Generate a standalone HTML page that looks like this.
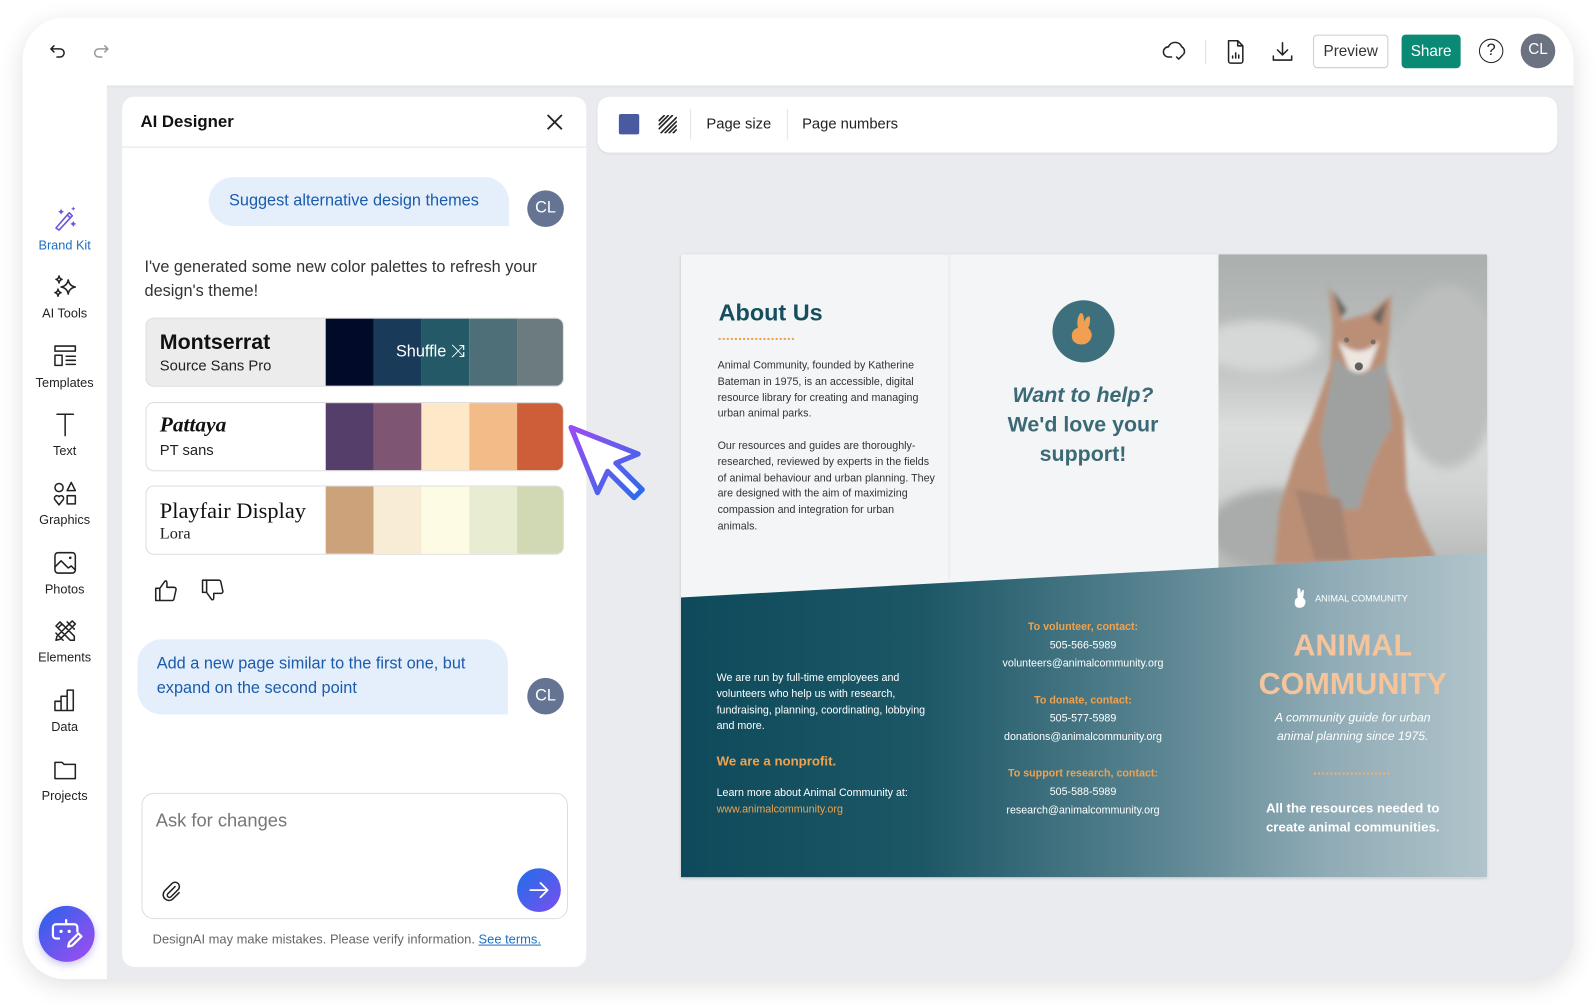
<!DOCTYPE html>
<html><head><meta charset="utf-8"><style>
*{margin:0;padding:0;box-sizing:border-box}
body{width:1596px;height:1008px;overflow:hidden;background:#fff;font-family:"Liberation Sans",sans-serif;color:#222}
#w{position:absolute;left:0;top:0;width:1568px;height:990px;transform:scale(1.01786);transform-origin:0 0}
.a{position:absolute}
.frame{left:22px;top:17px;width:1524px;height:945px;border-radius:42px;background:#e9ebee;overflow:hidden;box-shadow:0 6px 24px rgba(0,0,0,.12)}
.top{left:0;top:0;width:1524px;height:67px;background:#fff;box-shadow:0 1px 3px rgba(0,0,0,.08)}
.side{left:0;top:67px;width:83px;height:878px;background:#fff}
.si{position:absolute;left:0;width:83px;text-align:center;font-size:12.5px;color:#222}
.si svg{display:block;margin:0 auto 6px}
.ico{fill:none;stroke:#222;stroke-width:1.5;stroke-linecap:round;stroke-linejoin:round}
.panel{left:120px;top:95px;width:456px;height:855px;background:#fff;border-radius:12px}
.card{position:absolute;left:23px;width:411px;height:68px;border:1px solid #ddd;border-radius:8px;overflow:hidden;background:#fff}
.sw{position:absolute;top:0;height:100%;width:47px}
.bub{position:absolute;background:#e5effc;color:#1a5bab;font-size:16px}
.av{position:absolute;width:36px;height:36px;border-radius:50%;background:#667493;color:#fff;font-size:16px;text-align:center;line-height:36px}
.br{left:669px;top:250px;width:792px;height:612px;background:#f4f5f6;box-shadow:0 1px 3px rgba(0,0,0,.2);overflow:hidden;font-family:"Liberation Sans",sans-serif}
.sm{font-size:10.5px;line-height:15.8px;color:#333}
.w{color:#fff}
.or{color:#f0a24e}
</style></head><body><div id="w">
<div class="a frame">
 <div class="a top">
  <svg class="a" style="left:26px;top:24px" width="18" height="18" viewBox="0 0 18 18"><path class="ico" d="M5 4 L2 7 L5 10 M2 7 H11 A4 4 0 0 1 11 15 H8"/></svg>
  <svg class="a" style="left:68px;top:24px" width="18" height="18" viewBox="0 0 18 18"><path class="ico" style="stroke:#999" d="M13 4 L16 7 L13 10 M16 7 H7 A4 4 0 0 0 7 15 H10"/></svg>
  <svg class="a" style="left:1120px;top:21px" width="26" height="24" viewBox="0 0 26 24"><path class="ico" d="M9 18 H6 A5 5 0 0 1 6 8 A7 7 0 0 1 19 8 A5 5 0 0 1 21 15 M14 18 l2 2 l4 -4"/></svg>
  <div class="a" style="left:1162px;top:22px;width:1px;height:24px;background:#ddd"></div>
  <svg class="a" style="left:1181px;top:21px" width="22" height="26" viewBox="0 0 22 26"><path class="ico" d="M4 2 H13 L18 7 V22 A2 2 0 0 1 16 24 H6 A2 2 0 0 1 4 22 Z M13 2 V7 H18 M8 19 V17 M11 19 V14 M14 19 V16"/></svg>
  <svg class="a" style="left:1226px;top:22px" width="24" height="24" viewBox="0 0 24 24"><path class="ico" d="M12 3 V15 M7 10 L12 15 L17 10 M3 16 V20 H21 V16"/></svg>
  <div class="a" style="left:1268px;top:17px;width:74px;height:33px;border:1px solid #ccc;border-radius:4px;font-size:15px;text-align:center;line-height:31px;color:#333">Preview</div>
  <div class="a" style="left:1355px;top:17px;width:58px;height:33px;background:#0a8a74;border-radius:4px;font-size:15px;text-align:center;line-height:33px;color:#fff">Share</div>
  <div class="a" style="left:1431px;top:21px;width:24px;height:24px;border:1.6px solid #222;border-radius:50%;font-size:16px;text-align:center;line-height:21px">?</div>
  <div class="a" style="left:1472px;top:16px;width:34px;height:34px;border-radius:50%;background:#6b7280;color:#fff;font-size:15px;text-align:center;line-height:32px">CL</div>
 </div>
 <div class="a side">
  <div class="si" style="top:118px;color:#1a6fc4"><svg width="26" height="26" viewBox="0 0 26 26"><path fill="none" stroke="#6b55e0" stroke-width="1.6" stroke-linejoin="round" d="M4 22 L17 7 L20 10 L7 24 Z M15 9 L18 12"/><path fill="#6b55e0" d="M9 3 l1 2 2 1 -2 1 -1 2 -1 -2 -2 -1 2 -1z M21 15 l1 2 2 1 -2 1 -1 2 -1 -2 -2 -1 2 -1z M21 1 l.7 1.3 1.3.7 -1.3.7 -.7 1.3 -.7 -1.3 -1.3 -.7 1.3 -.7z"/></svg>Brand Kit</div>
  <div class="si" style="top:185px"><svg width="26" height="26" viewBox="0 0 26 26"><path class="ico" d="M16 6 Q17 12 23 13 Q17 14 16 20 Q15 14 9 13 Q15 12 16 6Z M7 2 Q7.5 5 10 5.5 Q7.5 6 7 9 Q6.5 6 4 5.5 Q6.5 5 7 2Z M6 15 Q6.5 18 9 18.5 Q6.5 19 6 22 Q5.5 19 3 18.5 Q5.5 18 6 15Z"/></svg>AI Tools</div>
  <div class="si" style="top:253px"><svg width="26" height="26" viewBox="0 0 26 26"><path class="ico" d="M3 3 H23 V8 H3Z M3 12 H10 V22 H3Z M14 13 H23 M14 17 H23 M14 21 H23"/></svg>Templates</div>
  <div class="si" style="top:320px"><svg width="26" height="26" viewBox="0 0 26 26"><path class="ico" d="M5 3 H21 M13 3 V24"/></svg>Text</div>
  <div class="si" style="top:388px"><svg width="26" height="26" viewBox="0 0 26 26"><circle class="ico" cx="7" cy="7" r="4"/><path class="ico" d="M19 2 L23 10 H15Z M15 15 H23 V23 H15Z M7 24 L3 19 A2.5 2.5 0 0 1 7 16 A2.5 2.5 0 0 1 11 19Z"/></svg>Graphics</div>
  <div class="si" style="top:456px"><svg width="26" height="26" viewBox="0 0 26 26"><rect class="ico" x="3" y="3" width="20" height="20" rx="3"/><path class="ico" d="M3 17 L9 11 L16 18 L19 16 L23 20"/><circle cx="18" cy="8" r="1.3" fill="#222"/></svg>Photos</div>
  <div class="si" style="top:523px"><svg width="26" height="26" viewBox="0 0 26 26"><path class="ico" d="M4 8 L8 4 L22 18 L22 22 L18 22 Z M6 10 L10 6 M15 4 L22 11 M4 15 L11 22 M20 3 L23 6 L8 21 L4 22 L5 18 Z"/></svg>Elements</div>
  <div class="si" style="top:591px"><svg width="26" height="26" viewBox="0 0 26 26"><path class="ico" d="M3 23 V14 H9 V23 M9 23 V9 H15 V23 M15 23 V3 H21 V23 Z M3 23 H21"/></svg>Data</div>
  <div class="si" style="top:659px"><svg width="26" height="26" viewBox="0 0 26 26"><path class="ico" d="M3 6 H10 L12 8 H23 V22 H3Z"/></svg>Projects</div>
  <div class="a" style="left:16px;top:806px;width:55px;height:55px;border-radius:50%;background:linear-gradient(135deg,#2563eb,#a64cf0);box-shadow:0 3px 8px rgba(80,60,200,.3)">
   <svg width="55" height="55" viewBox="0 0 55 55"><path fill="none" stroke="#fff" stroke-width="2.2" stroke-linejoin="round" stroke-linecap="round" d="M27 14 V18 M20 32 H17 A3 3 0 0 1 14 29 V21 A3 3 0 0 1 17 18 H35 A3 3 0 0 1 38 21 V25 M29 40 L30 36 L39 27 L42 30 L33 39 Z"/><circle cx="22" cy="25" r="1.6" fill="#fff"/><circle cx="30" cy="25" r="1.6" fill="#fff"/></svg>
  </div>
 </div>
</div>

<div class="a panel">
 <div class="a" style="left:18px;top:16px;font-size:16.5px;font-weight:bold;color:#111">AI Designer</div>
 <svg class="a" style="left:416px;top:16px" width="18" height="18"><path d="M2 2 L16 16 M16 2 L2 16" stroke="#222" stroke-width="1.8"/></svg>
 <div class="a" style="left:0;top:49px;width:456px;height:1px;background:#e3e3e3"></div>
 <div class="bub" style="left:85px;top:79px;width:295px;height:48px;border-radius:24px 24px 0 24px;line-height:48px;padding-left:20px">Suggest alternative design themes</div>
 <div class="av" style="left:398px;top:92px">CL</div>
 <div class="a" style="left:22px;top:156px;font-size:16px;line-height:24px;color:#333;width:420px">I've generated some new color palettes to refresh your design's theme!</div>
 <div class="card" style="top:217px;background:#ececec">
  <div class="a" style="left:13px;top:12px;font-size:21px;font-weight:bold;color:#111">Montserrat</div>
  <div class="a" style="left:13px;top:39px;font-size:14.5px;color:#222">Source Sans Pro</div>
  <div class="sw" style="left:176px;background:#020a2a"></div><div class="sw" style="left:223px;background:#193a58"></div><div class="sw" style="left:270px;background:#245a68"></div><div class="sw" style="left:317px;background:#4e6e78"></div><div class="sw" style="left:364px;background:#6b7b80;width:47px"></div>
  <div class="a" style="left:245px;top:22px;font-size:16px;color:#fff">Shuffle <span style="font-size:17px">⤨</span></div>
 </div>
 <div class="card" style="top:300px">
  <div class="a" style="left:13px;top:9px;font-size:21px;font-weight:bold;font-style:italic;font-family:'Liberation Serif',serif;color:#111">Pattaya</div>
  <div class="a" style="left:13px;top:39px;font-size:14.5px;color:#222">PT sans</div>
  <div class="sw" style="left:176px;background:#553e6a"></div><div class="sw" style="left:223px;background:#7e5572"></div><div class="sw" style="left:270px;background:#fde8c8"></div><div class="sw" style="left:317px;background:#f2bb88"></div><div class="sw" style="left:364px;background:#cc5f3a"></div>
 </div>
 <div class="card" style="top:382px">
  <div class="a" style="left:13px;top:11px;font-size:22px;font-family:'Liberation Serif',serif;color:#111">Playfair Display</div>
  <div class="a" style="left:13px;top:38px;font-size:16px;font-family:'Liberation Serif',serif;color:#222">Lora</div>
  <div class="sw" style="left:176px;background:#cba27a"></div><div class="sw" style="left:223px;background:#f8ecd4"></div><div class="sw" style="left:270px;background:#fdfbe4"></div><div class="sw" style="left:317px;background:#e8ecd0"></div><div class="sw" style="left:364px;background:#d0d8b4"></div>
 </div>
 <svg class="a" style="left:31px;top:473px" width="24" height="24" viewBox="0 0 24 24"><path class="ico" d="M2 10 H6 V22 H2Z M6 10 L11 3 Q13 2 13 5 V9 H20 A2 2 0 0 1 22 11 L20 20 A2 2 0 0 1 18 22 H6"/></svg>
 <svg class="a" style="left:77px;top:473px" width="24" height="24" viewBox="0 0 24 24"><path class="ico" d="M2 2 H6 V14 H2Z M6 14 L11 21 Q13 22 13 19 V15 H20 A2 2 0 0 0 22 13 L20 4 A2 2 0 0 0 18 2 H6"/></svg>
 <div class="bub" style="left:15px;top:533px;width:364px;height:74px;border-radius:24px 24px 0 24px;line-height:24px;padding:13px 0 0 19px">Add a new page similar to the first one, but expand on the second point</div>
 <div class="av" style="left:398px;top:571px">CL</div>
 <div class="a" style="left:19px;top:684px;width:419px;height:124px;border:1px solid #ddd;border-radius:12px">
  <div class="a" style="left:13px;top:16px;font-size:18px;color:#777">Ask for changes</div>
  <svg class="a" style="left:17px;top:84px" width="22" height="22" viewBox="0 0 22 22"><path class="ico" d="M15 7 L8 14 A2 2 0 0 0 11 17 L18 10 A4 4 0 0 0 12 4 L5 11 A5.5 5.5 0 0 0 13 19 L19 13"/></svg>
  <div class="a" style="left:368px;top:73px;width:43px;height:43px;border-radius:50%;background:linear-gradient(135deg,#1f6fe8,#7a4ff0)"><svg width="43" height="43"><path d="M13 21.5 H30 M23 14.5 L30 21.5 L23 28.5" fill="none" stroke="#fff" stroke-width="1.8" stroke-linecap="round" stroke-linejoin="round"/></svg></div>
 </div>
 <div class="a" style="left:30px;top:821px;font-size:12.7px;color:#666">DesignAI may make mistakes. Please verify information. <span style="color:#1a6fc4;text-decoration:underline">See terms.</span></div>
</div>

<svg class="a" style="left:555px;top:412px" width="90" height="90" viewBox="0 0 90 90"><defs><linearGradient id="cg" x1="0" y1="0" x2="1" y2="1"><stop offset="0" stop-color="#9b4cf2"/><stop offset="1" stop-color="#2a6ce8"/></linearGradient></defs><path d="M6 8 L72 34 L50 43 L76 69 L68 77 L42 51 L32 72 Z" fill="#fff" stroke="url(#cg)" stroke-width="5" stroke-linejoin="round"/></svg>

<div class="a" style="left:587px;top:95px;width:943px;height:55px;background:#fff;border-radius:12px;box-shadow:0 1px 2px rgba(0,0,0,.06)">
 <div class="a" style="left:21px;top:17px;width:20px;height:20px;background:#4a5aa0;border-radius:2px"></div>
 <svg class="a" style="left:60px;top:18px" width="18" height="18"><path d="M0 6 L6 0 M0 10 L10 0 M0 14 L14 0 M2 18 L18 2 M6 18 L18 6 M10 18 L18 10 M14 18 L18 14" stroke="#222" stroke-width="1.6"/></svg>
 <div class="a" style="left:91px;top:12px;width:1px;height:30px;background:#e3e3e3"></div>
 <div class="a" style="left:107px;top:19px;font-size:14.5px;color:#222">Page size</div>
 <div class="a" style="left:186px;top:12px;width:1px;height:30px;background:#e3e3e3"></div>
 <div class="a" style="left:201px;top:19px;font-size:14.5px;color:#222">Page numbers</div>
</div>

<div class="a br">
 <div class="a" style="left:263px;top:0;width:1px;height:320px;background:#e6e6e6"></div>
 <svg class="a" style="left:528px;top:0" width="264" height="310" viewBox="0 0 264 310">
  <defs>
   <linearGradient id="bg1" x1="0" y1="0" x2="0" y2="1"><stop offset="0" stop-color="#8f9593"/><stop offset=".35" stop-color="#a9aeac"/><stop offset=".55" stop-color="#d0d3d2"/><stop offset=".75" stop-color="#c2c5c4"/><stop offset="1" stop-color="#9ea2a0"/></linearGradient>
   <filter id="bl"><feGaussianBlur stdDeviation="5"/></filter>
   <filter id="bl2"><feGaussianBlur stdDeviation="2"/></filter>
  </defs>
  <rect width="264" height="310" fill="url(#bg1)"/>
  <g filter="url(#bl)">
   <ellipse cx="40" cy="90" rx="60" ry="25" fill="#c8cbca"/>
   <ellipse cx="225" cy="120" rx="50" ry="90" fill="#a5a9a7"/>
   <ellipse cx="60" cy="270" rx="70" ry="40" fill="#8c908e"/>
  </g>
  <g filter="url(#bl2)">
   <path d="M108 30 L122 65 L148 58 L170 40 L168 80 L164 110 L182 160 L185 230 L200 270 L215 300 L55 305 L60 250 L75 200 L92 160 L110 110 L112 70 Z" fill="#a46a4a"/>
   <path d="M112 35 L120 62 L126 55 Z M166 45 L160 70 L150 62 Z" fill="#3a302a"/>
   <path d="M115 100 Q135 130 165 105 L170 170 Q150 200 138 250 L112 250 L100 180 Z" fill="#7e8280"/>
   <path d="M118 85 Q138 105 158 85 L148 112 Q138 120 128 112 Z" fill="#e8ded6"/>
   <path d="M75 230 L95 300 L130 300 L120 240 Z" fill="#8a5a42"/>
  </g>
  <circle cx="138" cy="110" r="4" fill="#2a2a2a"/>
  <circle cx="126" cy="84" r="2.5" fill="#4a4030"/><circle cx="152" cy="86" r="2.5" fill="#4a4030"/>
  <rect width="264" height="310" fill="#fff" opacity=".25"/>
 </svg>
 <div class="a" style="left:0;top:0;width:792px;height:612px;background:linear-gradient(90deg,#0e4a5b 0%,#1c5766 30%,#5b8592 60%,#8fabb5 80%,#b1c4cb 100%);clip-path:polygon(0 337px,792px 293px,792px 612px,0 612px)"></div>

 <div class="a" style="left:37px;top:44px;font-size:23px;font-weight:bold;color:#164e60">About Us</div>
 <div class="a" style="left:37px;top:82px;width:74px;border-top:2px dotted #f0a24e"></div>
 <div class="a sm" style="left:36px;top:102px;width:215px">Animal Community, founded by Katherine Bateman in 1975, is an accessible, digital resource library for creating and managing urban animal parks.</div>
 <div class="a sm" style="left:36px;top:181px;width:215px">Our resources and guides are thoroughly-researched, reviewed by experts in the fields of animal behaviour and urban planning. They are designed with the aim of maximizing compassion and integration for urban animals.</div>

 <div class="a" style="left:365px;top:45px;width:61px;height:61px;border-radius:50%;background:#3e6f7c"></div>
 <svg class="a" style="left:378px;top:54px" width="36" height="44" viewBox="0 0 36 44"><path d="M14 4 Q18 2 18 12 Q22 4 24 8 Q24 16 22 18 Q28 24 24 30 Q20 36 12 34 Q6 32 6 26 Q6 20 12 18 Q10 10 14 4Z" fill="#f0a050"/></svg>
 <div class="a" style="left:285px;top:124px;width:220px;text-align:center;font-size:21px;line-height:29px;color:#3b6a76;font-weight:bold"><i>Want to help?</i><br>We'd love your<br>support!</div>

 <div class="a sm w" style="left:35px;top:409px;width:210px">We are run by full-time employees and volunteers who help us with research, fundraising, planning, coordinating, lobbying and more.</div>
 <div class="a or" style="left:35px;top:490px;font-size:13px;font-weight:bold">We are a nonprofit.</div>
 <div class="a sm w" style="left:35px;top:522px">Learn more about Animal Community at:<br><span class="or">www.animalcommunity.org</span></div>

 <div class="a sm w" style="left:280px;top:357px;width:230px;text-align:center;line-height:18px"><b class="or">To volunteer, contact:</b><br>505-566-5989<br>volunteers@animalcommunity.org</div>
 <div class="a sm w" style="left:280px;top:429px;width:230px;text-align:center;line-height:18px"><b class="or">To donate, contact:</b><br>505-577-5989<br>donations@animalcommunity.org</div>
 <div class="a sm w" style="left:280px;top:501px;width:230px;text-align:center;line-height:18px"><b class="or">To support research, contact:</b><br>505-588-5989<br>research@animalcommunity.org</div>

 <svg class="a" style="left:600px;top:326px" width="18" height="24" viewBox="0 0 18 24"><path d="M6 2 Q9 1 9 7 Q11 2 12 4 Q12 10 11 11 Q15 14 13 18 Q11 22 6 21 Q3 20 3 16 Q3 12 6 11 Q5 6 6 2Z" fill="#fff"/></svg>
 <div class="a w" style="left:623px;top:333px;font-size:9px">ANIMAL COMMUNITY</div>
 <div class="a" style="left:528px;top:366px;width:264px;text-align:center;font-size:30px;line-height:38px;color:#f5c49a;font-weight:bold">ANIMAL<br>COMMUNITY</div>
 <div class="a w" style="left:528px;top:446px;width:264px;text-align:center;font-size:12px;line-height:18px;font-style:italic">A community guide for urban<br>animal planning since 1975.</div>
 <div class="a" style="left:622px;top:509px;width:74px;border-top:2px dotted #f0b070"></div>
 <div class="a w" style="left:528px;top:534px;width:264px;text-align:center;font-size:13px;line-height:19px;font-weight:bold">All the resources needed to<br>create animal communities.</div>
</div>
</div></body></html>
